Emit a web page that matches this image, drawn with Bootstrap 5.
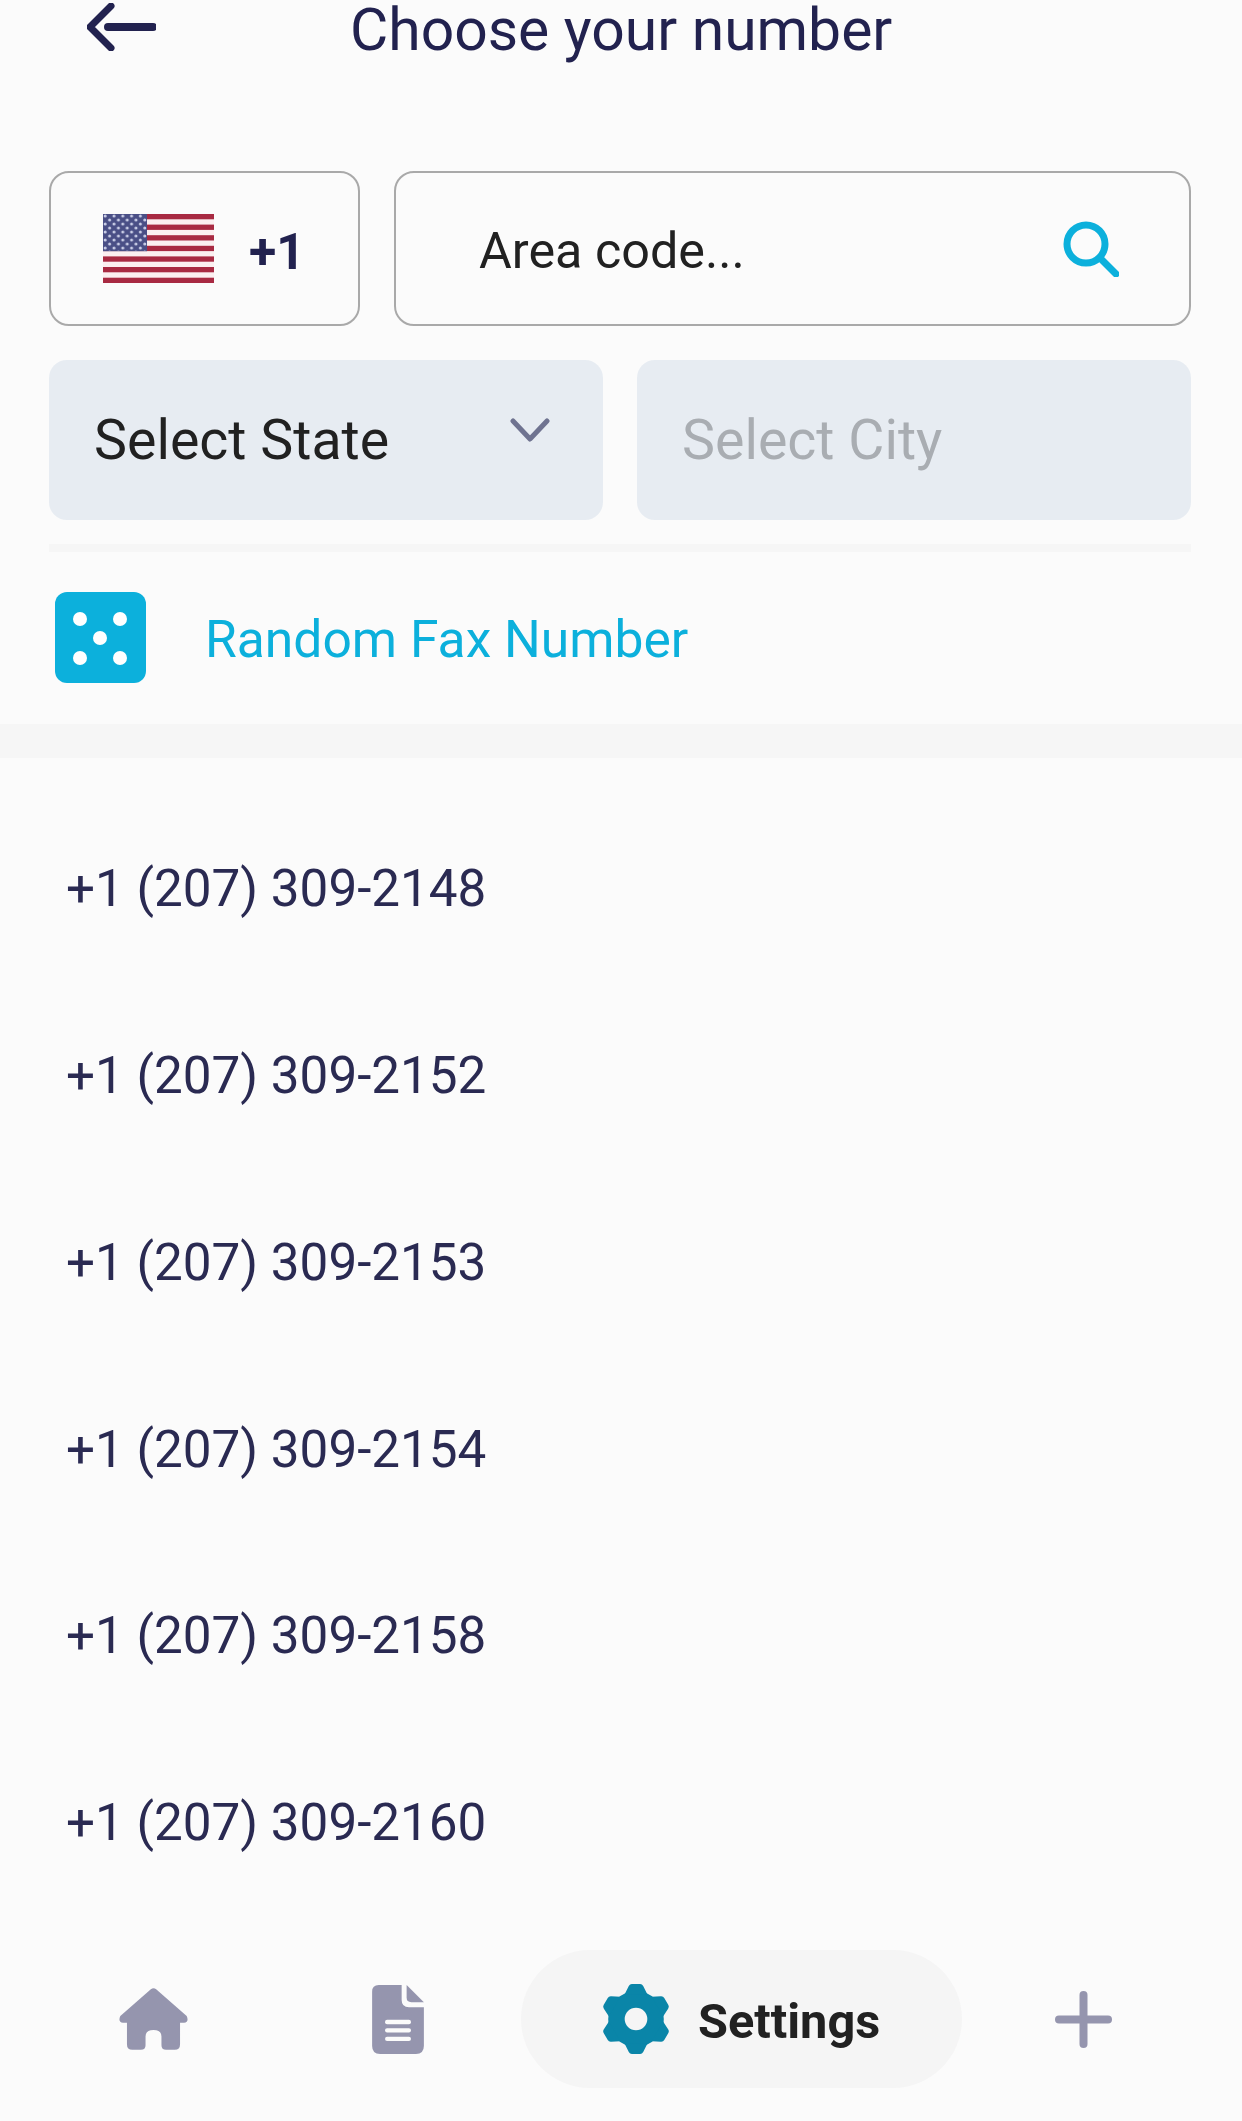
<!DOCTYPE html>
<html lang="en">
<head>
    <meta charset="UTF-8">
    <meta name="viewport" content="width=device-width, initial-scale=1.0">
    <title>Choose your number</title>
    <link href="https://cdn.jsdelivr.net/npm/bootstrap@5.3.0/dist/css/bootstrap.min.css" rel="stylesheet">
    <style>
        body {
            font-family: Roboto, "Liberation Sans", sans-serif;
            background-color: #fbfbfb;
            width: 1242px;
            height: 2121px;
            overflow: hidden;
        }

        .top-head { height: 171px; }
        .back-arrow { width: 69px; height: 48px; margin: 3px 0 0 87px; flex: none; }
        .head-title {
            margin: 0 0 0 194px;
            font-size: 58.8px;
            line-height: 59px;
            font-weight: 400;
            color: #22224f;
        }

        .search-row { padding: 0 51px 0 49px; gap: 34px; }
        .code-box, .area-box {
            height: 155px;
            background: transparent;
            border: 2px solid #a9a9a9;
            border-radius: 20px;
        }
        .code-box { width: 311px; flex: none; padding-left: 52px; gap: 35px; }
        .code-box span { font-size: 50px; font-weight: 700; color: #22224f; margin-top: 8px; }
        .area-box { flex: 1; padding: 0 70px 0 83px; }
        .area-box span { font-size: 50.3px; color: #212121; margin-top: 4px; }

        .pick-row { padding: 34px 51px 0 49px; gap: 34px; }
        .pick-box {
            flex: 1;
            height: 160px;
            background: #e7ecf2;
            border-radius: 18px;
            padding: 0 53px 0 45px;
            font-size: 55.5px;
            color: #212121;
        }
        .pick-box span { margin-top: 2px; }
        .pick-box.is-off { color: #a9adb2; }
        .pick-box svg { margin-top: -20px; }

        .thin-line { height: 8px; margin: 24px 51px 0 49px; background: #f6f6f6; }

        .random-row { height: 172px; padding: 0 0 2px 55px; gap: 60px; }
        .random-row span { font-size: 51.6px; color: #0cb0dc; margin: 6px 0 0 -1px; }

        .thick-band { height: 34px; background: #f6f6f6; }

        .num-list { padding-top: 38px; }
        .num-list .list-group-item {
            height: 186.7px;
            display: flex;
            align-items: center;
            background: transparent;
            border: 0;
            padding: 1px 0 0 66px;
            font-size: 51.2px;
            color: #2a2a52;
        }

        .tab-bar { margin-top: 34px; height: 138px; }
        .tab-home { width: 69px; height: 62px; margin-left: 119px; flex: none; }
        .tab-doc { width: 52px; height: 69px; margin-left: 184px; flex: none; }
        .tab-pill {
            width: 441px;
            height: 138px;
            margin-left: 97px;
            padding-left: 80px;
            gap: 27px;
            background: #f5f5f5;
            border-radius: 69px;
            flex: none;
        }
        .tab-pill span { font-size: 48.7px; font-weight: 700; color: #212121; margin-top: 4px; }
        .tab-plus { width: 57px; height: 57px; margin-left: 93px; flex: none; }
    </style>
</head>
<body>
    <header class="top-head d-flex align-items-start">
        <svg class="back-arrow" viewBox="0 0 69 48" fill="none" stroke="#22224f" stroke-width="7" stroke-linecap="round" stroke-linejoin="round">
            <path d="M24 3 L3 24 L24 45"/>
            <path d="M21 24 H66" stroke-width="8"/>
        </svg>
        <h1 class="head-title">Choose your number</h1>
    </header>

    <div class="search-row d-flex">
        <div class="code-box d-flex align-items-center">
            <svg width="111" height="69" viewBox="0 0 111 69">
                <defs>
                    <pattern id="stars" width="8.8" height="8" patternUnits="userSpaceOnUse">
                        <circle cx="2.2" cy="2" r="1.5" fill="#c9cde6"/>
                        <circle cx="6.6" cy="6" r="1.5" fill="#c9cde6"/>
                    </pattern>
                </defs>
                <rect width="111" height="69" fill="#fbeff0"/>
                <g fill="#a82a42">
                    <rect y="0" width="111" height="5.3"/>
                    <rect y="10.6" width="111" height="5.3"/>
                    <rect y="21.2" width="111" height="5.3"/>
                    <rect y="31.8" width="111" height="5.3"/>
                    <rect y="42.4" width="111" height="5.3"/>
                    <rect y="53" width="111" height="5.3"/>
                    <rect y="63.7" width="111" height="5.3"/>
                </g>
                <rect width="44" height="37.2" fill="#4a4f86"/>
                <rect width="44" height="37.2" fill="url(#stars)"/>
            </svg>
            <span>+1</span>
        </div>
        <div class="area-box d-flex align-items-center justify-content-between">
            <span>Area code...</span>
            <svg width="56" height="56" viewBox="0 0 56 56" fill="none" stroke="#0cb0dc" stroke-width="7" stroke-linecap="round">
                <circle cx="23" cy="23" r="19"/>
                <path d="M37 37 L53 53"/>
            </svg>
        </div>
    </div>

    <div class="pick-row d-flex">
        <div class="pick-box d-flex align-items-center justify-content-between">
            <span>Select State</span>
            <svg width="40" height="24" viewBox="0 0 40 24" fill="none" stroke="#6f7390" stroke-width="5" stroke-linecap="round" stroke-linejoin="round">
                <path d="M3 3 L20 21 L37 3"/>
            </svg>
        </div>
        <div class="pick-box is-off d-flex align-items-center">
            <span>Select City</span>
        </div>
    </div>

    <div class="thin-line"></div>

    <div class="random-row d-flex align-items-center">
        <svg width="91" height="91" viewBox="0 0 91 91">
            <rect width="91" height="91" rx="12" fill="#0cb0dc"/>
            <g fill="#fff">
                <circle cx="25" cy="27" r="7"/>
                <circle cx="65" cy="27" r="7"/>
                <circle cx="45" cy="46" r="7"/>
                <circle cx="25" cy="66" r="7"/>
                <circle cx="65" cy="66" r="7"/>
            </g>
        </svg>
        <span>Random Fax Number</span>
    </div>

    <div class="thick-band"></div>

    <div class="num-list list-group list-group-flush">
        <div class="list-group-item">+1 (207) 309-2148</div>
        <div class="list-group-item">+1 (207) 309-2152</div>
        <div class="list-group-item">+1 (207) 309-2153</div>
        <div class="list-group-item">+1 (207) 309-2154</div>
        <div class="list-group-item">+1 (207) 309-2158</div>
        <div class="list-group-item">+1 (207) 309-2160</div>
    </div>

    <nav class="tab-bar d-flex align-items-center">
        <svg class="tab-home" viewBox="0 0 208 186" fill="#9595ae">
            <path d="M96 3 Q104 -3 112 3 L204 84 Q212 102 196 104 L184 104 L184 170 Q184 186 168 186 L142 186 Q128 186 128 172 L128 146 Q128 126 104 126 Q80 126 80 146 L80 172 Q80 186 66 186 L40 186 Q24 186 24 170 L24 104 L12 104 Q-4 102 4 84 Z"/>
        </svg>
        <svg class="tab-doc" viewBox="0 0 156 208">
            <path fill="#9595ae" d="M20 0 H89 V45 Q89 67 111 67 H156 V184 Q156 208 132 208 H24 Q0 208 0 184 V20 Q0 0 20 0 Z"/>
            <path fill="#9595ae" d="M104 0 L156 52 H118 Q104 52 104 38 Z"/>
            <g fill="#fbfbfb">
                <rect x="39" y="105" width="78" height="13" rx="6"/>
                <rect x="39" y="130" width="78" height="13" rx="6"/>
                <rect x="39" y="156" width="78" height="13" rx="6"/>
            </g>
        </svg>
        <div class="tab-pill d-flex align-items-center">
            <svg width="70" height="70" viewBox="-34 -34 68 68">
                <circle r="19" fill="none" stroke="#0a85a8" stroke-width="16"/>
                <g fill="#0a85a8">
                    <path id="tooth" d="M-11 -24 L-7 -32 Q-6 -34 -4 -34 H4 Q6 -34 7 -32 L11 -24 Z"/>
                    <use href="#tooth" transform="rotate(60)"/>
                    <use href="#tooth" transform="rotate(120)"/>
                    <use href="#tooth" transform="rotate(180)"/>
                    <use href="#tooth" transform="rotate(240)"/>
                    <use href="#tooth" transform="rotate(300)"/>
                </g>
            </svg>
            <span>Settings</span>
        </div>
        <svg class="tab-plus" viewBox="0 0 57 57" fill="none" stroke="#9595ae" stroke-width="8" stroke-linecap="round">
            <path d="M28.5 4 V53"/>
            <path d="M4 28.5 H53"/>
        </svg>
    </nav>

    <script src="https://cdn.jsdelivr.net/npm/bootstrap@5.3.0/dist/js/bootstrap.bundle.min.js"></script>
</body>
</html>
